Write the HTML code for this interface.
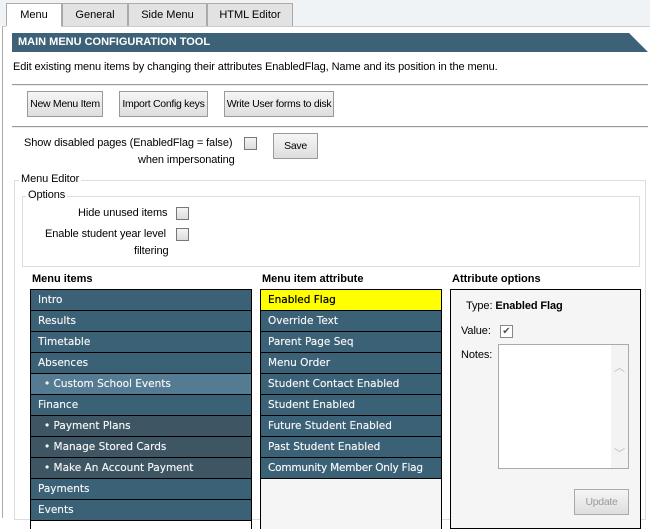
<!DOCTYPE html>
<html><head><style>
*{box-sizing:border-box;margin:0;padding:0}
body{width:650px;height:518px;overflow:hidden;background:#fff;font-family:"Liberation Sans",Arial,sans-serif;font-size:11px;color:#000;position:relative}
.a{position:absolute;white-space:nowrap}
.t{font-size:11px;letter-spacing:-0.1px}
.tabbar{left:0;top:0;width:650px;height:26px;background:#f0f3f6}
.tab{top:3px;height:23px;border:1px solid #aaa;border-bottom:none;background:#e2e2e2;text-align:center;line-height:22px;font-size:11px}
.btn{height:26px;border:1px solid #999;background:linear-gradient(#f6f6f6,#dedede);text-align:center;line-height:24px;font-size:10.5px;letter-spacing:-0.3px}
.cb{width:13px;height:13px;border:1px solid #777;background:linear-gradient(#f4f4f4,#ddd)}
.list div{height:21px;border-bottom:1px solid #000;background:#3b6177;color:#f2f2f2;font-family:"DejaVu Sans",Verdana,sans-serif;font-size:10.5px;line-height:20px;padding-left:7px;white-space:nowrap;text-shadow:0 0 0.4px #fff}
.list div.s{padding-left:13px}
.list div.d{background:#3e5564}
.list div.l{background:#557b93}
.hdr{font-weight:bold;font-size:11px}
</style></head><body>
<div class="a tabbar"></div>
<div class="a tab" style="left:6px;width:56px;background:#fff;height:24px">Menu</div>
<div class="a tab" style="left:62px;width:66px">General</div>
<div class="a tab" style="left:128px;width:79px">Side Menu</div>
<div class="a tab" style="left:207px;width:86px">HTML Editor</div>
<div class="a" style="left:2px;top:26px;width:648px;height:492px;border-left:1px solid #aaa;border-top:1px solid #ccc;background:#fff"></div>
<div class="a" style="left:6px;top:26px;width:55px;height:2px;background:#fff"></div>
<svg class="a" style="left:12px;top:33px" width="638" height="19"><polygon points="0,0 617,0 636,19 0,19" fill="#3d6278"/></svg>
<div class="a" style="left:18px;top:33px;line-height:19px;color:#fff;font-weight:bold;font-size:11px">MAIN MENU CONFIGURATION TOOL</div>
<div class="a t" style="left:13px;top:61px">Edit existing menu items by changing their attributes EnabledFlag, Name and its position in the menu.</div>
<div class="a" style="left:12px;top:84px;width:636px;height:2px;border-top:1px solid #999;border-bottom:1px solid #eee"></div>
<div class="a btn" style="left:27px;top:91px;width:76px">New Menu Item</div>
<div class="a btn" style="left:119px;top:91px;width:89px">Import Config keys</div>
<div class="a btn" style="left:224px;top:91px;width:110px">Write User forms to disk</div>
<div class="a" style="left:12px;top:126px;width:636px;height:2px;border-top:1px solid #999;border-bottom:1px solid #eee"></div>
<div class="a t" style="left:24px;top:137px">Show disabled pages (EnabledFlag = false)</div>
<div class="a cb" style="left:244px;top:137px"></div>
<div class="a t" style="left:138px;top:154px">when impersonating</div>
<div class="a btn" style="left:273px;top:133px;width:45px">Save</div>
<div class="a" style="left:14px;top:180px;width:632px;height:340px;border:1px solid #ddd"></div>
<div class="a t" style="left:19px;top:173px;background:#fff;padding:0 2px">Menu Editor</div>
<div class="a" style="left:22px;top:196px;width:618px;height:71px;border:1px solid #ddd"></div>
<div class="a t" style="left:26px;top:189px;background:#fff;padding:0 2px">Options</div>
<div class="a t" style="left:78px;top:207px">Hide unused items</div>
<div class="a cb" style="left:176px;top:207px"></div>
<div class="a t" style="left:45px;top:228px">Enable student year level</div>
<div class="a cb" style="left:176px;top:228px"></div>
<div class="a t" style="left:134px;top:245px">filtering</div>
<div class="a hdr" style="left:32px;top:273px">Menu items</div>
<div class="a hdr" style="left:262px;top:273px">Menu item attribute</div>
<div class="a hdr" style="left:452px;top:273px">Attribute options</div>
<div class="a list" style="left:30px;top:289px;width:222px;border:1px solid #000;border-bottom:none;height:240px">
<div>Intro</div><div>Results</div><div>Timetable</div><div>Absences</div>
<div class="s l">• Custom School Events</div><div>Finance</div>
<div class="s d">• Payment Plans</div><div class="s d">• Manage Stored Cards</div><div class="s d">• Make An Account Payment</div>
<div>Payments</div><div>Events</div></div>
<div class="a list" style="left:260px;top:289px;width:182px;border:1px solid #000;border-bottom:none;height:240px;background:#f5f5f5">
<div style="background:#ffff00;color:#000;text-shadow:0 0 0.4px #000">Enabled Flag</div><div>Override Text</div><div>Parent Page Seq</div><div>Menu Order</div><div>Student Contact Enabled</div><div>Student Enabled</div><div>Future Student Enabled</div><div>Past Student Enabled</div><div style="letter-spacing:-0.2px">Community Member Only Flag</div></div>
<div class="a" style="left:450px;top:289px;width:191px;height:240px;border:1px solid #000;background:#f5f5f5"></div>
<div class="a t" style="left:466px;top:300px">Type: <b>Enabled Flag</b></div>
<div class="a t" style="left:461px;top:325px">Value:</div>
<div class="a cb" style="left:500px;top:325px;background:#fff;border-color:#888;font-size:10px;line-height:11px;text-align:center;color:#555">✔</div>
<div class="a t" style="left:461px;top:349px">Notes:</div>
<div class="a" style="left:498px;top:344px;width:131px;height:125px;border:1px solid #aaa;background:#fff"></div>
<div class="a" style="left:611px;top:345px;width:17px;height:123px;background:#f3f3f3;color:#bbb;font-size:11px;text-align:center"><div style="margin-top:14px">︿</div><div style="margin-top:70px">﹀</div></div>
<div class="a btn" style="left:574px;top:489px;width:55px;color:#999;border-color:#aaa">Update</div>
</body></html>
